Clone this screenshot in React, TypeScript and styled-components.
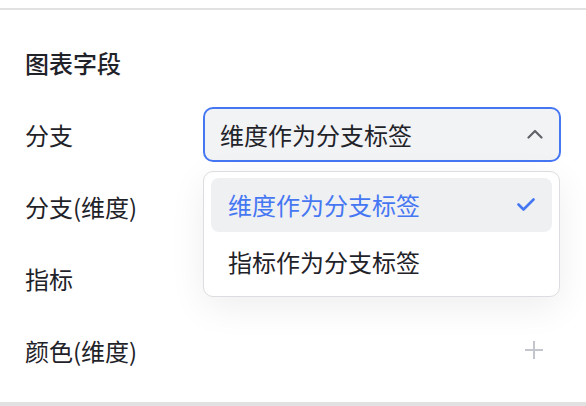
import React from "react";
import styled, { createGlobalStyle } from "styled-components";

const GlobalStyle = createGlobalStyle`
    html,
    body {
        margin: 0;
        padding: 0;
        background: #ffffff;
    }

    body {
        font-family: "Noto Sans CJK SC", "Noto Sans", sans-serif;
        color: #1f2329;
    }
`;

const Panel = styled.div`
    box-sizing: border-box;
    margin-top: 8px;
    height: 398px;
    border-top: 2px solid #e1e1e1;
    border-bottom: 4px solid #e1e1e1;
    padding: 0 25px;
`;

const Title = styled.h3`
    margin: 0;
    padding-top: 37px;
    padding-bottom: 19px;
    height: 32px;
    line-height: 32px;
    font-size: 24px;
    font-weight: 500;
    color: #1f2329;
`;

const Row = styled.div`
    display: flex;
    align-items: center;
    height: 72px;
`;

const Label = styled.span`
    width: 178px;
    flex-shrink: 0;
    font-size: 24px;
    color: #1f2329;
`;

const Control = styled.div`
    flex: 1;
    display: flex;
    justify-content: flex-end;
    padding-right: 17px;
`;

const SelectWrap = styled.div`
    position: relative;
    width: 358px;
`;

const SelectBox = styled.div`
    box-sizing: border-box;
    display: flex;
    align-items: center;
    justify-content: space-between;
    height: 55px;
    padding: 0 16px 0 15px;
    border: 2px solid #4677f3;
    border-radius: 10px;
    background: #f2f3f5;
    font-size: 24px;
    color: #1f2329;
`;

const Menu = styled.div`
    position: absolute;
    top: 64px;
    left: 0;
    box-sizing: border-box;
    width: 357px;
    padding: 6px 7px 7px;
    border: 1px solid #dcdde0;
    border-radius: 10px;
    background: #ffffff;
    box-shadow: 0 10px 36px rgba(0, 0, 0, 0.07);
    z-index: 10;
`;

const Option = styled.div<{ selected?: boolean }>`
    display: flex;
    align-items: center;
    justify-content: space-between;
    height: 54px;
    padding: 0 17px;
    border-radius: 8px;
    font-size: 24px;
    color: ${(props) => (props.selected ? "#4677f3" : "#1f2329")};
    background: ${(props) => (props.selected ? "#eff0f2" : "transparent")};

    & + & {
        margin-top: 3px;
    }
`;

const AddButton = styled.button`
    display: flex;
    padding: 0;
    border: none;
    background: none;
    cursor: pointer;
`;

const options = ["维度作为分支标签", "指标作为分支标签"];

const ChevronUp = () => (
    <svg width="16" height="10" viewBox="0 0 16 10" fill="none">
        <path d="M1.5 8.5L8 2l6.5 6.5" stroke="#5f6368" strokeWidth="2.2" strokeLinecap="round" strokeLinejoin="round" />
    </svg>
);

const Check = () => (
    <svg width="18" height="13" viewBox="0 0 18 13" fill="none">
        <path d="M1.5 6.5l5 5L16.5 1.5" stroke="#4677f3" strokeWidth="2.6" strokeLinecap="round" strokeLinejoin="round" />
    </svg>
);

const Plus = () => (
    <svg width="20" height="20" viewBox="0 0 20 20" fill="none">
        <path d="M10 1v18M1 10h18" stroke="#c3c6cc" strokeWidth="2" />
    </svg>
);

const App = () => {
    const selected = options[0];

    return (
        <>
            <GlobalStyle />
            <Panel>
                <Title>图表字段</Title>
                <Row>
                    <Label>分支</Label>
                    <SelectWrap>
                        <SelectBox>
                            <span>{selected}</span>
                            <ChevronUp />
                        </SelectBox>
                        <Menu>
                            {options.map((opt) => (
                                <Option key={opt} selected={opt === selected}>
                                    <span>{opt}</span>
                                    {opt === selected && <Check />}
                                </Option>
                            ))}
                        </Menu>
                    </SelectWrap>
                </Row>
                <Row>
                    <Label>分支(维度)</Label>
                </Row>
                <Row>
                    <Label>指标</Label>
                </Row>
                <Row>
                    <Label>颜色(维度)</Label>
                    <Control>
                        <AddButton>
                            <Plus />
                        </AddButton>
                    </Control>
                </Row>
            </Panel>
        </>
    );
};

export default App;
